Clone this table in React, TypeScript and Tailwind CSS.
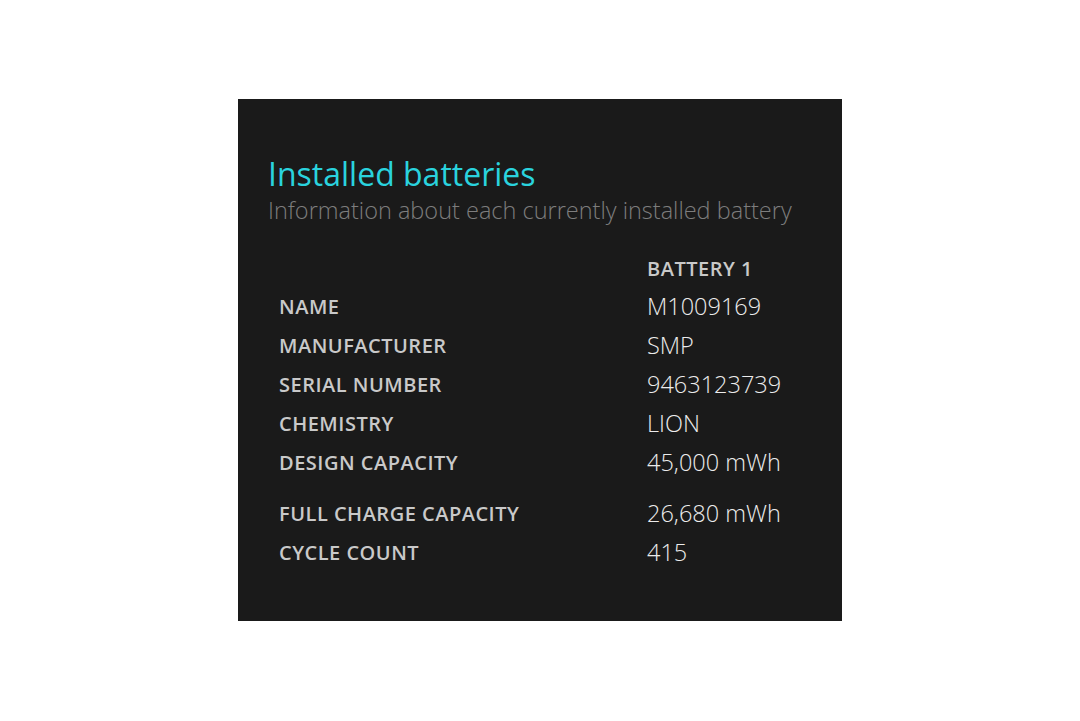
const rows: [string, string][] = [
  ["NAME", "M1009169"],
  ["MANUFACTURER", "SMP"],
  ["SERIAL NUMBER", "9463123739"],
  ["CHEMISTRY", "LION"],
  ["DESIGN CAPACITY", "45,000 mWh"],
];

const rows2: [string, string][] = [
  ["FULL CHARGE CAPACITY", "26,680 mWh"],
  ["CYCLE COUNT", "415"],
];

function Row({ label, value }: { label: string; value: string }) {
  return (
    <div className="grid h-[39px] grid-cols-[368px_1fr] items-center">
      <span className="text-[20px] font-semibold tracking-[0.5px] text-[#c9c9c9]">{label}</span>
      <span className="text-[23.5px] font-light text-[#ececec]">{value}</span>
    </div>
  );
}

export default function App() {
  return (
    <div className="flex h-[721px] w-[1080px] items-start justify-center bg-white pt-[99px] font-['Open_Sans',sans-serif]">
      <div className="flex h-[522px] w-[604px] flex-col bg-[#1a1a1a] pl-[30px] pt-[53px]">
        <h1 className="text-[32px] leading-[44px] text-[#2ad3de]">Installed batteries</h1>
        <p className="text-[23.5px] font-light leading-[28px] text-[#7d7d7d]">
          Information about each currently installed battery
        </p>
        <div className="mt-[26px] pl-[11px]">
          <div className="grid h-[37px] grid-cols-[368px_1fr] items-center">
            <span />
            <span className="text-[20px] font-semibold tracking-[0.5px] text-[#c9c9c9]">BATTERY 1</span>
          </div>
          {rows.map(([l, v]) => (
            <Row key={l} label={l} value={v} />
          ))}
          <div className="h-[12px]" />
          {rows2.map(([l, v]) => (
            <Row key={l} label={l} value={v} />
          ))}
        </div>
      </div>
    </div>
  );
}
